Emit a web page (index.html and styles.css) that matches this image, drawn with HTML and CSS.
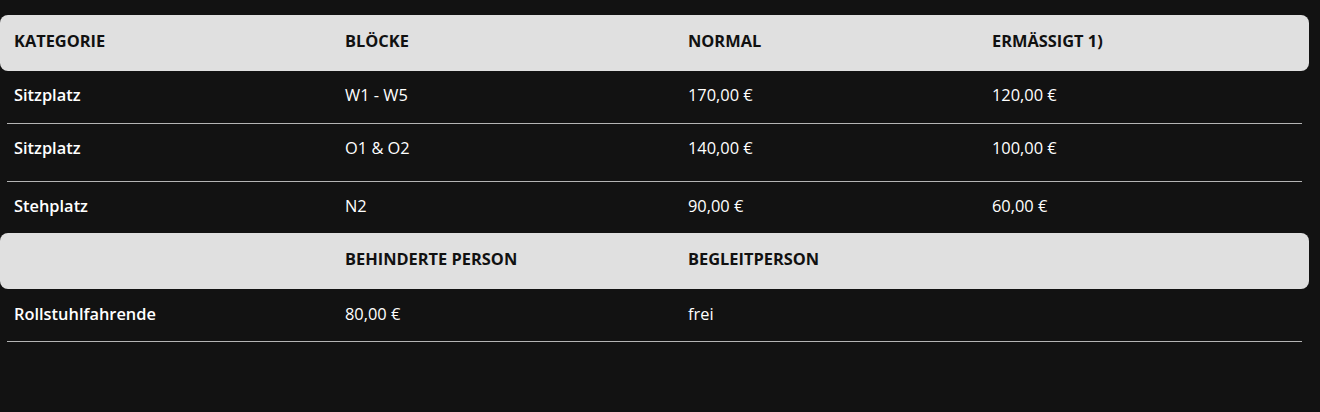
FILE: index.html
```html
<!DOCTYPE html>
<html lang="de">
<head>
<meta charset="utf-8">
<title>Preise</title>
<link rel="stylesheet" href="styles.css">
</head>
<body>
<div class="table">
  <div class="head">
    <div>KATEGORIE</div><div>BLÖCKE</div><div>NORMAL</div><div>ERMÄSSIGT 1)</div>
  </div>
  <div class="row r1">
    <div class="cat">Sitzplatz</div><div>W1 - W5</div><div>170,00 €</div><div>120,00 €</div>
  </div>
  <div class="row r2">
    <div class="cat">Sitzplatz</div><div>O1 &amp; O2</div><div>140,00 €</div><div>100,00 €</div>
  </div>
  <div class="row r3 noline">
    <div class="cat">Stehplatz</div><div>N2</div><div>90,00 €</div><div>60,00 €</div>
  </div>
  <div class="head">
    <div></div><div>BEHINDERTE PERSON</div><div>BEGLEITPERSON</div><div></div>
  </div>
  <div class="row r1 r4">
    <div class="cat">Rollstuhlfahrende</div><div>80,00 €</div><div>frei</div><div></div>
  </div>
</div>
</body>
</html>
```

FILE: styles.css
```css
html, body {
  margin: 0;
  padding: 0;
  background: #121212;
}
body {
  font-family: "Open Sans", "Noto Sans", sans-serif;
  font-size: 16.4px;
  color: #ffffff;
}
.table {
  width: 1309px;
  padding-top: 15px;
}
.head {
  display: grid;
  grid-template-columns: 331px 343px 304px 1fr;
  align-items: center;
  box-sizing: border-box;
  height: 56px;
  padding-left: 14px;
  padding-bottom: 6px;
  background: #e0e0e0;
  border-radius: 8px;
  color: #111111;
  font-weight: 700;
}
.row {
  display: grid;
  grid-template-columns: 331px 343px 304px 1fr;
  align-items: center;
  box-sizing: border-box;
  margin: 0 7px;
  padding-left: 7px;
  border-bottom: 1px solid #b4b4b4;
}
.row.noline {
  border-bottom: none;
}
.r1 { height: 53px; padding-bottom: 5px; }
.r2 { height: 58px; padding-bottom: 10px; }
.r3 { height: 51px; padding-bottom: 4px; }
.r4 { padding-bottom: 3px; }
.cat {
  font-weight: 600;
}
```
